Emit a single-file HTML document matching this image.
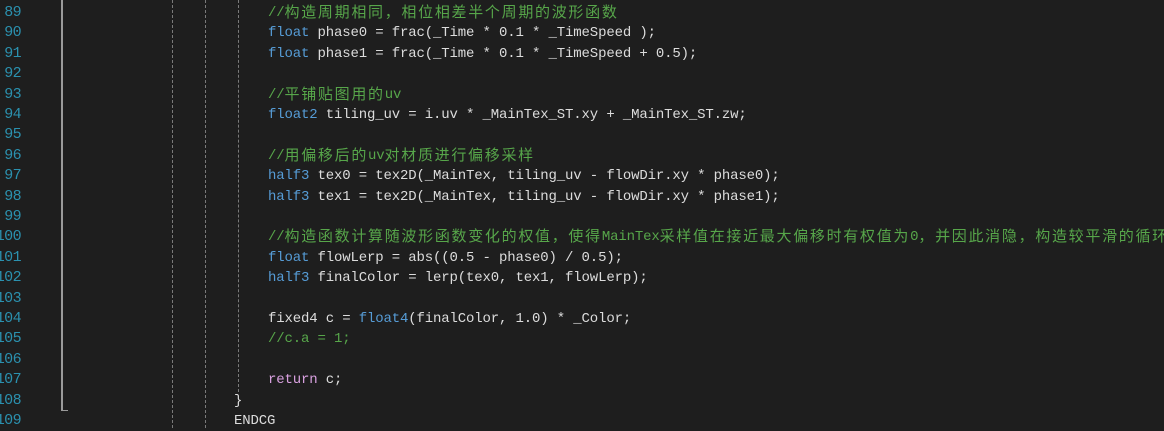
<!DOCTYPE html>
<html><head><meta charset="utf-8"><style>
html,body{margin:0;padding:0;background:#1e1e1e;width:1164px;height:428px;overflow:hidden;}
.ln{position:absolute;left:-30px;width:51px;text-align:right;color:#2b91af;font:15px/20px "Liberation Mono",monospace;letter-spacing:-0.6px;white-space:pre;}
.c{position:absolute;left:268px;height:20px;color:#dcdcdc;font:14px/20px "Liberation Mono",monospace;letter-spacing:-0.15px;white-space:pre;}
.k{color:#569cd6}.g{color:#57a64a}.r{color:#d8a0df}
.z{font-family:"Noto Sans CJK SC","WenQuanYi Zen Hei",sans-serif;font-size:15px;line-height:14px;letter-spacing:1.7px;vertical-align:top;position:relative;top:2px;}
.dash{position:absolute;top:0;width:0;border-left:1px dashed #7a7a7a;}
</style></head><body>
<div style="position:absolute;left:61px;top:0;width:2px;height:411px;background:#9a9a9a"></div>
<div style="position:absolute;left:61px;top:410px;width:7px;height:1px;background:#9a9a9a"></div>
<div class="dash" style="left:172px;height:428px"></div>
<div class="dash" style="left:205px;height:428px"></div>
<div class="dash" style="left:238px;height:392px"></div>

<div class="ln" style="top:3px">89</div>
<div class="ln" style="top:23.4px">90</div>
<div class="ln" style="top:43.8px">91</div>
<div class="ln" style="top:64.2px">92</div>
<div class="ln" style="top:84.6px">93</div>
<div class="ln" style="top:105px">94</div>
<div class="ln" style="top:125.4px">95</div>
<div class="ln" style="top:145.8px">96</div>
<div class="ln" style="top:166.2px">97</div>
<div class="ln" style="top:186.6px">98</div>
<div class="ln" style="top:207px">99</div>
<div class="ln" style="top:227.4px">100</div>
<div class="ln" style="top:247.8px">101</div>
<div class="ln" style="top:268.2px">102</div>
<div class="ln" style="top:288.6px">103</div>
<div class="ln" style="top:309px">104</div>
<div class="ln" style="top:329.4px">105</div>
<div class="ln" style="top:349.8px">106</div>
<div class="ln" style="top:370.2px">107</div>
<div class="ln" style="top:390.6px">108</div>
<div class="ln" style="top:411px">109</div>

<div class="c g" style="top:3px">//<span class="z">构造周期相同，相位相差半个周期的波形函数</span></div>
<div class="c" style="top:23.4px"><span class="k">float</span> phase0 = frac(_Time * 0.1 * _TimeSpeed );</div>
<div class="c" style="top:43.8px"><span class="k">float</span> phase1 = frac(_Time * 0.1 * _TimeSpeed + 0.5);</div>
<div class="c g" style="top:84.6px">//<span class="z">平铺贴图用的</span>uv</div>
<div class="c" style="top:105px"><span class="k">float2</span> tiling_uv = i.uv * _MainTex_ST.xy + _MainTex_ST.zw;</div>
<div class="c g" style="top:145.8px">//<span class="z">用偏移后的</span>uv<span class="z">对材质进行偏移采样</span></div>
<div class="c" style="top:166.2px"><span class="k">half3</span> tex0 = tex2D(_MainTex, tiling_uv - flowDir.xy * phase0);</div>
<div class="c" style="top:186.6px"><span class="k">half3</span> tex1 = tex2D(_MainTex, tiling_uv - flowDir.xy * phase1);</div>
<div class="c g" style="top:227.4px">//<span class="z">构造函数计算随波形函数变化的权值，使得</span>MainTex<span class="z">采样值在接近最大偏移时有权值为</span>0<span class="z">，并因此消隐，构造较平滑的循环</span></div>
<div class="c" style="top:247.8px"><span class="k">float</span> flowLerp = abs((0.5 - phase0) / 0.5);</div>
<div class="c" style="top:268.2px"><span class="k">half3</span> finalColor = lerp(tex0, tex1, flowLerp);</div>
<div class="c" style="top:309px">fixed4 c = <span class="k">float4</span>(finalColor, 1.0) * _Color;</div>
<div class="c g" style="top:329.4px">//c.a = 1;</div>
<div class="c" style="top:370.2px"><span class="r">return</span> c;</div>
<div class="c" style="top:390.6px;left:234px">}</div>
<div class="c" style="top:411px;left:234px">ENDCG</div>
</body></html>
